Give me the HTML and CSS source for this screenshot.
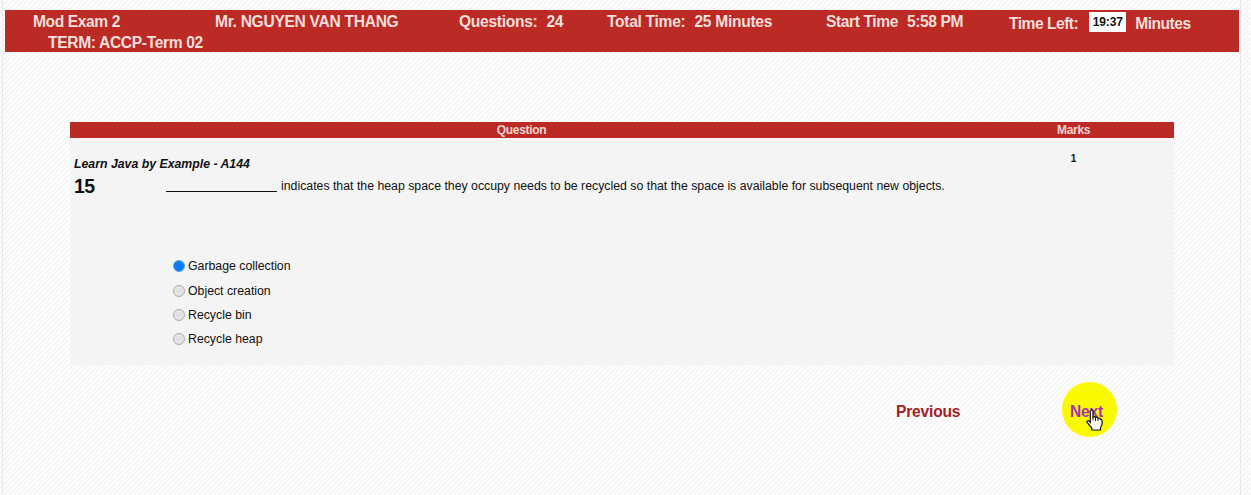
FILE: index.html
```html
<!DOCTYPE html>
<html lang="en">
<head>
<meta charset="utf-8">
<title>Mod Exam 2</title>
<link rel="stylesheet" href="styles.css">
</head>
<body>
<div class="page">
  <header class="exam-bar">
    <div class="exam">
      <div class="exam-name">Mod Exam 2</div>
      <div class="term">TERM: ACCP-Term 02</div>
    </div>
    <div class="student">Mr. NGUYEN VAN THANG</div>
    <div class="count">Questions:<span class="value">24</span></div>
    <div class="total">Total Time:<span class="value">25 Minutes</span></div>
    <div class="start">Start Time<span class="value">5:58 PM</span></div>
    <div class="left">Time Left:<span class="clock">19:37</span>Minutes</div>
  </header>
  <main class="content">
    <div class="table-head">
      <div class="question-col">Question</div>
      <div class="marks-col">Marks</div>
    </div>
    <section class="question">
      <div class="source-row">
        <div class="source">Learn Java by Example - A144</div>
        <div class="mark">1</div>
      </div>
      <div class="prompt-row">
        <div class="number">15</div>
        <div class="blank"></div>
        <div class="prompt">indicates that the heap space they occupy needs to be recycled so that the space is available for subsequent new objects.</div>
      </div>
      <div class="answers">
        <label class="answer"><span class="radio checked"></span>Garbage collection</label>
        <label class="answer"><span class="radio"></span>Object creation</label>
        <label class="answer"><span class="radio"></span>Recycle bin</label>
        <label class="answer"><span class="radio"></span>Recycle heap</label>
      </div>
    </section>
    <nav class="pager">
      <a class="previous">Previous</a>
      <a class="next"><span>Next</span>
        <svg class="cursor" width="17" height="22" viewBox="0 0 17 22"><path d="M5 1.2C6.2.5 7 1.2 7 2.4V8c.8-1 2.2-.7 2.5.5.9-.7 2.1-.3 2.5.8 1-.7 2.3.1 2.5 1.2 1-.2 1.6.4 1.6 1.5v3.2l-1.6 3.6V21H5.8v-2L1.3 13.6c-1-1.5.7-2.6 1.8-1.5l1.2 1.3V2.3z" fill="#fff" stroke="#111" stroke-width="1.2"/><path d="M7 8v3.5M9.5 9v3M12 9.5V12" stroke="#222" fill="none"/></svg>
      </a>
    </nav>
  </main>
</div>
</body>
</html>
```
FILE: styles.css
```css
* { box-sizing: border-box; }
body {
  margin: 0;
  height: 495px;
  overflow: hidden;
  font: 12.3px/16px "Liberation Sans", Arial, sans-serif;
  color: #111;
  background: repeating-linear-gradient(135deg, #fdfdfd 0 1.4px, #f4f4f4 2.1px 2.8px, #fdfdfd 3.5355px);
}
.page {
  width: 1239px;
  height: 495px;
  margin-left: 2px;
  padding: 10px 0 0 2px;
  border: solid #e9e9ec;
  border-width: 0 1px;
}
.exam-bar {
  display: flex;
  width: 1234px;
  height: 42px;
  padding-left: 28px;
  background: #bc2a26;
  color: #f6dfd9;
  font-size: 15.6px;
  letter-spacing: -.3px;
  font-weight: bold;
  line-height: 21px;
  white-space: nowrap;
}
.exam-bar > div { padding-top: 1px; }
.exam { width: 182px; }
.exam-name { letter-spacing: -.4px; }
.term { padding-left: 15px; line-height: 21px; letter-spacing: -.35px; }
.student { width: 244px; }
.count { width: 148px; }
.total { width: 219px; }
.start { width: 183px; letter-spacing: -.4px; }
.value { margin-left: 9px; }
.exam-bar .left { padding-top: 3px; letter-spacing: -.5px; }
.clock {
  display: inline-block;
  width: 37px;
  height: 20px;
  margin: -1px 9px 0 11px;
  background: #fff;
  color: #111;
  font-size: 12px;
  letter-spacing: -.1px;
  line-height: 21px;
  text-align: center;
  vertical-align: top;
}
.content { width: 1104px; margin: 70px 0 0 65px; }
.table-head {
  display: flex;
  height: 16px;
  background: #bc2a26;
  color: #f4d5d0;
  font-size: 12px;
  letter-spacing: -.3px;
  font-weight: bold;
  text-align: center;
}
.question-col { width: 904px; }
.marks-col { width: 201px; }
.question { height: 227px; padding: 13px 0 0 4px; background: #f4f4f4; }
.source-row { display: flex; }
.source {
  width: 900px;
  padding-top: 5px;
  font-size: 12.3px;
  font-style: italic;
  font-weight: bold;
}
.mark { width: 201px; font-size: 10px; font-weight: bold; text-align: center; }
.prompt-row { display: flex; height: 24px; padding-top: 2px; align-items: center; }
.number { width: 92px; padding-top: 2px; font-size: 19.5px; letter-spacing: -.5px; font-weight: bold; }
.blank { width: 111px; height: 1px; margin: 13px 4px 0 0; background: #111; }
.prompt { padding-top: 2px; white-space: nowrap; }
.answers { padding: 58px 0 0 99px; }
.answer { display: flex; align-items: center; height: 24.4px; }
.radio {
  width: 12px;
  height: 12px;
  margin-right: 3px;
  border: 1px solid #aaa;
  border-radius: 50%;
  background: radial-gradient(#e0e0e0, #e8e8e8);
}
.checked { border-color: #5aa5ef; background: #087bf5; }
.pager { display: flex; height: 55px; margin-top: 17px; padding-left: 826px; font-size: 15.6px; letter-spacing: -.2px; font-weight: bold; line-height: 60px; }
.previous { width: 166px; color: #a52125; }
.next { position: relative; width: 55px; border-radius: 50%; background: #f9f900; color: #a832b4; }
.next span { padding-left: 8px; }
.cursor { position: absolute; left: 24px; top: 27px; }
```
